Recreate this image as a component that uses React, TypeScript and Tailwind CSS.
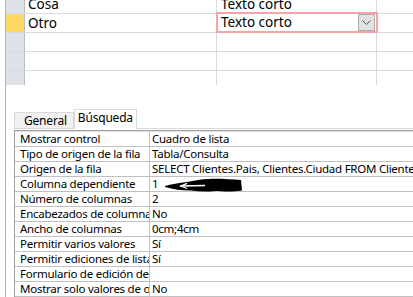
import React from 'react';

const gridRows = [
  { name: 'Cosa', type: 'Texto corto', h: 'h-[19px]' },
  { name: 'Otro', type: 'Texto corto', h: 'h-[19px]', active: true },
  { name: '', type: '', h: 'h-[19px]' },
  { name: '', type: '', h: 'h-[19px]' },
  { name: '', type: '', h: 'h-[14px]', last: true },
];

const props: [string, string][] = [
  ['Mostrar control', 'Cuadro de lista'],
  ['Tipo de origen de la fila', 'Tabla/Consulta'],
  ['Origen de la fila', 'SELECT Clientes.Pais, Clientes.Ciudad FROM Clientes;'],
  ['Columna dependiente', '1'],
  ['Número de columnas', '2'],
  ['Encabezados de columna', 'No'],
  ['Ancho de columnas', '0cm;4cm'],
  ['Permitir varios valores', 'Sí'],
  ['Permitir ediciones de lista', 'Sí'],
  ['Formulario de edición de elementos de lista', ''],
  ['Mostrar solo valores de origen de la fila', 'No'],
];

function Scribble() {
  return (
    <svg className="absolute left-[165px] top-[178px]" width="78" height="15" viewBox="0 0 78 15">
      <path d="M0 8 C6 6 14 5 22 4 C30 2.5 36 1 44 1 C54 0.5 66 1.5 76 2 L77 12.5 C68 14 58 13.5 50 13 C42 14 34 13.5 26 12.5 C16 12.5 8 11.5 0 9 Z" fill="#000" />
      <path d="M15 8 L40 7.5" stroke="#fff" strokeWidth="1.3" />
      <path d="M22 5.3 L16 8 L22 10.5" stroke="#fff" strokeWidth="1.3" fill="none" />
    </svg>
  );
}

export default function App() {
  return (
    <div className="relative w-[413px] h-[297px] overflow-hidden bg-white flex text-black" style={{ fontFamily: '"Noto Sans", "Open Sans", sans-serif' }}>
      <div className="w-[5px] shrink-0" />
      <div className="w-px shrink-0 bg-[#b4b4b4]" />
      <div className="flex-1 flex flex-col min-w-0">
        {/* design grid */}
        <div className="flex flex-col mt-[-5px]">
          {gridRows.map((r, i) => (
            <div key={i} className={`flex ${r.h} ${r.last ? '' : 'border-b border-[#d5dae3]'}`}>
              <div className={`w-[18px] shrink-0 ${r.active ? 'bg-[#fdd864]' : 'bg-[#dee2e8]'}`} />
              <div className="w-px shrink-0 bg-[#b9bec6]" />
              <div className="w-[191px] shrink-0 pl-[3px] text-[13.5px] leading-[19px] whitespace-nowrap">{r.name}</div>
              <div className="w-px shrink-0 bg-[#d5dae3]" />
              {r.active ? (
                <div className="relative w-[159px] shrink-0">
                  <div className="absolute left-[-1px] top-[-2px] w-[162px] h-[21px] border-2 border-[#f4a5a7] flex items-center justify-between pl-[3px] pr-[1px] text-[13.5px] bg-white">
                    <span className="leading-[17px]">{r.type}</span>
                    <div className="w-[17px] h-[17px] bg-[#e1e1e1] border border-[#adadad] flex items-center justify-center">
                      <svg width="9" height="5" viewBox="0 0 9 5">
                        <path d="M0.5 0.5 L4.5 4.5 L8.5 0.5" stroke="#555" strokeWidth="1" fill="none" />
                      </svg>
                    </div>
                  </div>
                </div>
              ) : (
                <div className="w-[159px] shrink-0 pl-[4px] text-[13.5px] leading-[19px] whitespace-nowrap">{r.type}</div>
              )}
              <div className="w-px shrink-0 bg-[#d5dae3]" />
              <div className="flex-1" />
            </div>
          ))}
        </div>

        {/* tabs */}
        <div className="mt-[24px] ml-[8px] flex items-end h-[25px] border-b border-[#d9d9d9] text-[12px] tracking-[-0.2px]">
          <div className="h-[16px] pl-[9px] pr-[6px] border border-b-0 border-[#d9d9d9] bg-[#f0f0f0] leading-[15px]">General</div>
          <div className="h-[20px] px-[3px] border border-b-0 border-[#d9d9d9] bg-white leading-[15px] mb-[-1px] pb-[2px]">Búsqueda</div>
        </div>

        {/* property sheet */}
        <div className="mt-px ml-[8px] border-t border-l border-[#a0a0a0] text-[11.5px] leading-[14px] tracking-[-0.25px]">
          <div className="h-px bg-[#e0e0e0]" />
          {props.map(([k, v], i) => (
            <div key={i} className="flex h-[15px] border-b border-[#c0c0c0]">
              <div className="w-[135px] shrink-0 pl-[5px] overflow-hidden whitespace-nowrap border-r border-[#c0c0c0]">{k}</div>
              <div className="flex-1 pl-[2px] overflow-hidden whitespace-nowrap">{v}</div>
            </div>
          ))}
        </div>
      </div>
      <Scribble />
    </div>
  );
}
